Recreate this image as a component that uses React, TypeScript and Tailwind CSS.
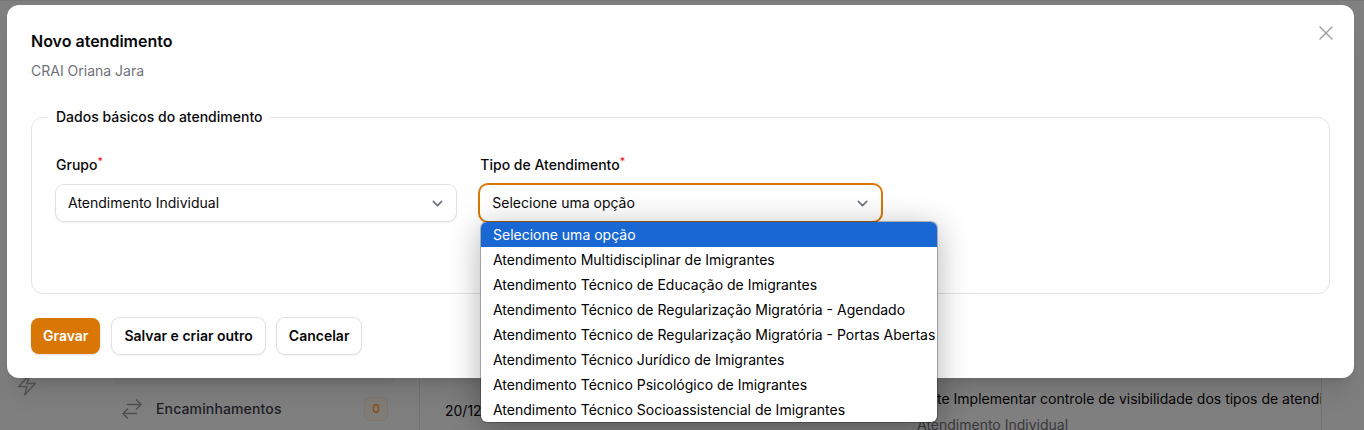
import { HiOutlineArrowsRightLeft, HiOutlineBolt, HiOutlineXMark } from "react-icons/hi2";

const OPTIONS = [
  "Selecione uma opção",
  "Atendimento Multidisciplinar de Imigrantes",
  "Atendimento Técnico de Educação de Imigrantes",
  "Atendimento Técnico de Regularização Migratória - Agendado",
  "Atendimento Técnico de Regularização Migratória - Portas Abertas",
  "Atendimento Técnico Jurídico de Imigrantes",
  "Atendimento Técnico Psicológico de Imigrantes",
  "Atendimento Técnico Socioassistencial de Imigrantes",
];

function Chevron() {
  return (
    <svg className="size-[21px] shrink-0 text-[#6b7280]" viewBox="0 0 20 20" fill="none" stroke="currentColor" strokeWidth="1.5" strokeLinecap="round" strokeLinejoin="round">
      <path d="M6 8l4 4 4-4" />
    </svg>
  );
}

function SelectField({ label, value, active = false }: { label: string; value: string; active?: boolean }) {
  return (
    <div className="relative flex flex-col gap-2">
      <label className="text-sm leading-6 font-medium">
        {label}
        <sup className="font-medium text-[#ef2020]">*</sup>
      </label>
      <button
        className={
          active
            ? "flex h-9 items-center justify-between rounded-lg bg-white pr-2 pl-3 text-left text-sm ring-2 ring-[#d97706]"
            : "flex h-9 items-center justify-between rounded-lg bg-white pr-2 pl-3 text-left text-sm shadow-sm ring-1 ring-[#e0e0e1]"
        }
      >
        {value}
        <Chevron />
      </button>
      {active && <OptionList />}
    </div>
  );
}

function OptionList() {
  return (
    <ul className="absolute top-[69px] left-[0.67px] z-20 w-[456px] overflow-hidden rounded-[6px] bg-white text-sm leading-[25px] whitespace-nowrap text-black shadow-[0_0_0_1px_rgba(0,0,0,0.25),0_6px_32px_rgba(0,0,0,0.32)]">
      {OPTIONS.map((option, i) => (
        <li key={option} className={i === 0 ? "h-[25px] bg-[#1967d2] pl-3 text-white" : "h-[25px] pl-3"}>
          {option}
        </li>
      ))}
    </ul>
  );
}

function Backdrop() {
  return (
    <div className="flex h-full border-t border-[#777777] pt-[372px]">
      <div className="flex w-[112px] pl-[15px]">
        <HiOutlineBolt className="size-6 text-[#56565a]" />
      </div>
      <nav className="flex w-[307px] flex-col">
        <div className="h-[11px] w-[283px] rounded-b-lg bg-[#7b7b7b]" />
        <div className="mt-[13px] flex w-[283px] items-center pr-[7px] pl-2 text-sm font-medium">
          <HiOutlineArrowsRightLeft className="size-6 text-[#505055]" />
          <span className="ml-3 tracking-[0.01em] text-[#202025]">Encaminhamentos</span>
          <span className="ml-auto flex h-6 w-6 items-center justify-center rounded-md bg-[#807d78] text-xs text-[#8c4a08] ring-1 ring-[#807668] ring-inset">0</span>
        </div>
      </nav>
      <div className="flex w-[903px] shrink-0 overflow-hidden border-x border-[#737373] text-sm text-[#050506]">
        <div className="w-[517px] shrink-0 pt-7 pl-[25px]">20/12</div>
        <div className="pt-4 whitespace-nowrap">
          <p>te Implementar controle de visibilidade dos tipos de atendimento</p>
          <p className="-ml-5 mt-[6px] text-[#39393d]">Atendimento Individual</p>
        </div>
      </div>
    </div>
  );
}

export default function App() {
  return (
    <div className="relative h-[430px] w-[1364px] overflow-hidden bg-[#7f7f7f] font-['Inter',sans-serif] text-[#09090b]">
      <Backdrop />
      <section role="dialog" className="absolute top-[5px] left-[7px] h-[373px] w-[1347px] rounded-xl bg-white p-6 shadow-xl">
        <header className="flex items-start justify-between">
          <div>
            <h2 className="text-base leading-6 font-semibold">Novo atendimento</h2>
            <p className="mt-2 text-sm text-[#71717a]">CRAI Oriana Jara</p>
          </div>
          <button aria-label="Fechar" className="-mt-2 -mr-2 text-[#a1a1aa]">
            <HiOutlineXMark className="size-6" />
          </button>
        </header>
        <fieldset className="mt-6 h-[189px] w-[1299px] rounded-xl border border-[#e4e4e5] px-6 pt-6">
          <legend className="-ml-2 px-2 text-sm leading-6 font-medium">Dados básicos do atendimento</legend>
          <div className="grid grid-cols-3 gap-6">
            <SelectField label="Grupo" value="Atendimento Individual" />
            <SelectField label="Tipo de Atendimento" value="Selecione uma opção" active />
          </div>
        </fieldset>
        <footer className="mt-6 flex gap-3 text-sm font-semibold">
          <button className="h-9 rounded-lg bg-[#d97706] px-3 text-white shadow-sm">Gravar</button>
          <button className="h-9 rounded-lg bg-white px-3 shadow-sm ring-1 ring-[#e0e0e1]">Salvar e criar outro</button>
          <button className="h-9 rounded-lg bg-white px-3 shadow-sm ring-1 ring-[#e0e0e1]">Cancelar</button>
        </footer>
      </section>
    </div>
  );
}
